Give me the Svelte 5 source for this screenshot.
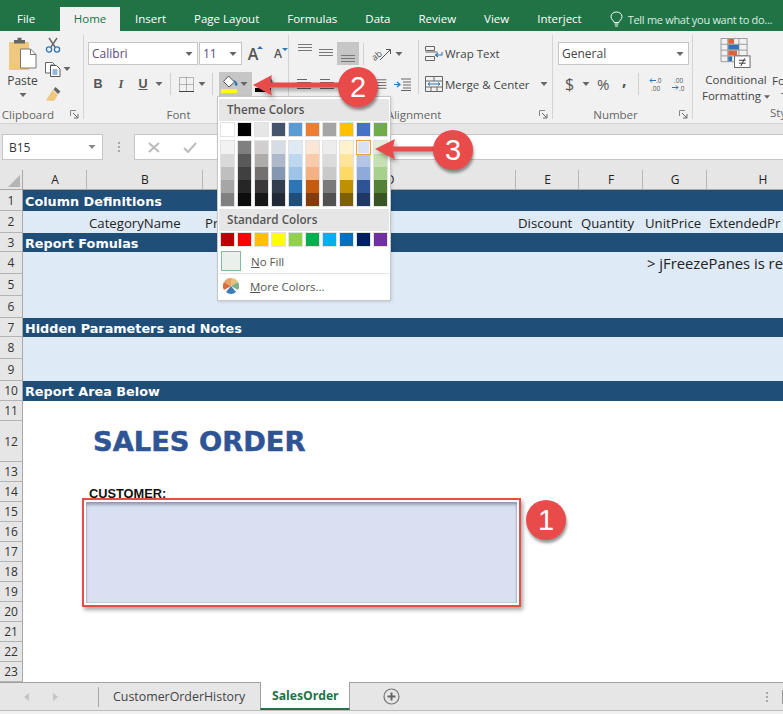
<script>
  const tabs = ['Insert', 'Page Layout', 'Formulas', 'Data', 'Review', 'View', 'Interject'];

  const columns = ['A', 'B', 'C', 'D', 'E', 'F', 'G', 'H'];

  // row heights as in the sheet, kind says how the band is painted
  const rows = [
    { n: 1, h: 21, kind: 'head', title: 'Column Definitions' },
    { n: 2, h: 22, kind: 'band', cells: [
      { col: 2, text: 'CategoryName' },
      { col: 3, text: 'Pr' },
      { col: 5, text: 'Discount' },
      { col: 6, text: 'Quantity' },
      { col: 7, text: 'UnitPrice' },
      { col: 8, text: 'ExtendedPr' }
    ] },
    { n: 3, h: 19, kind: 'head', title: 'Report Fomulas' },
    { n: 4, h: 22, kind: 'band', cells: [{ col: 7, text: '> jFreezePanes is re', note: true }] },
    { n: 5, h: 22, kind: 'band' },
    { n: 6, h: 22, kind: 'band' },
    { n: 7, h: 19, kind: 'head', title: 'Hidden Parameters and Notes' },
    { n: 8, h: 22, kind: 'band' },
    { n: 9, h: 22, kind: 'band' },
    { n: 10, h: 20, kind: 'head', title: 'Report Area Below' },
    { n: 11, h: 20 },
    { n: 12, h: 41, kind: 'big', cells: [{ col: 2, text: 'SALES ORDER' }] },
    { n: 13, h: 20 },
    { n: 14, h: 20, kind: 'customer', cells: [{ col: 2, text: 'CUSTOMER:' }] },
    { n: 15, h: 20 }, { n: 16, h: 20 }, { n: 17, h: 20 }, { n: 18, h: 20 },
    { n: 19, h: 20 }, { n: 20, h: 20 }, { n: 21, h: 20 }, { n: 22, h: 20 }, { n: 23, h: 20 }
  ];

  const rowTemplate = '20px ' + rows.map((r) => r.h + 'px').join(' ');

  const themeTop = ['#ffffff', '#000000', '#e7e6e6', '#44546a', '#5b9bd5', '#ed7d31', '#a5a5a5', '#ffc000', '#4472c4', '#70ad47'];
  const themeShades = [
    ['#f2f2f2', '#d9d9d9', '#bfbfbf', '#a6a6a6', '#808080'],
    ['#7f7f7f', '#595959', '#404040', '#262626', '#0d0d0d'],
    ['#d0cece', '#aeabab', '#757070', '#3a3838', '#171717'],
    ['#d6dce4', '#adb9ca', '#8497b0', '#333f4f', '#222b35'],
    ['#deeaf6', '#bdd7ee', '#9dc3e6', '#2e75b5', '#1e4e79'],
    ['#fbe5d5', '#f7cbac', '#f4b183', '#c55a11', '#833c0b'],
    ['#ededed', '#dbdbdb', '#c9c9c9', '#7b7b7b', '#525252'],
    ['#fff2cc', '#fee599', '#ffd966', '#bf9000', '#7f6000'],
    ['#d9e2f3', '#b4c6e7', '#8eaadb', '#2f5496', '#1f3864'],
    ['#e2efd9', '#c5e0b3', '#a8d08d', '#538135', '#375623']
  ];
  const standard = ['#c00000', '#ff0000', '#ffc000', '#ffff00', '#92d050', '#00b050', '#00b0f0', '#0070c0', '#002060', '#7030a0'];
</script>

{#snippet caret(w = 8)}
  <svg class="caret" width={w} height="4" viewBox="0 0 7 4"><path d="M0 0h7L3.500 4z" fill="#666" /></svg>
{/snippet}

{#snippet launcher()}
  <svg class="launch" width="9" height="9" viewBox="0 0 9 9">
    <path d="M.5 6V.5H6" fill="none" stroke="#888" />
    <path d="M3 3l4.500 4.500M8 4v4H4" fill="none" stroke="#666" />
  </svg>
{/snippet}

{#snippet lines(widths, x = 0)}
  <svg width="17" height="13" viewBox="0 0 17 13">
    {#each widths as w, i}
      <rect x={x} y={i * 3 + 1} width={w} height="1" fill="#666" />
    {/each}
  </svg>
{/snippet}

{#snippet valign(y)}
  <svg width="14" height="23" viewBox="0 0 14 23">
    {#each [0, 3, 6] as d}
      <rect x="0" y={y + d} width="14" height="1" fill="#777" />
    {/each}
  </svg>
{/snippet}

<div class="page">
  <header class="titlebar">
    <span class="file">File</span>
    <span class="tab active">Home</span>
    {#each tabs as t}
      <span class="tab">{t}</span>
    {/each}
    <span class="tellme">
      <svg width="13" height="16" viewBox="0 0 13 16">
        <path d="M4.200 11.500C3.800 9.600 1 8.500 1 5.600 1 3 3.400 1 6.500 1S12 3 12 5.600c0 2.900-2.800 4-3.200 5.900z" fill="none" stroke="#fff" />
        <path d="M4.500 13h4M5 15h3" stroke="#fff" />
      </svg>
      Tell me what you want to do...
    </span>
  </header>

  <section class="ribbon">
    <div class="group clipboard">
      <div class="body">
        <div class="paste">
          <svg width="29" height="35" viewBox="0 0 29 35">
            <path d="M1 5h20v28H1z" fill="#f0c77e" />
            <path d="M6 5V3h3.500V.8h4V3H17v3.500H6z" fill="#666" />
            <path d="M12.500 12h10l5.500 5.500V31h-15.500z" fill="#fff" stroke="#777" />
            <path d="M22.500 12v5.500H28" fill="none" stroke="#777" />
          </svg>
          <span class="paste-label">Paste</span>
          {@render caret()}
        </div>
        <div class="clip-tools">
          <div class="clip-tool">
            <svg width="16" height="16" viewBox="0 0 16 16">
              <path d="M4 1l6 9M12 1l-6 9" stroke="#666" stroke-width="1.400" fill="none" />
              <circle cx="4" cy="12.500" r="2.600" fill="none" stroke="#2e75b5" stroke-width="1.300" />
              <circle cx="12" cy="12.500" r="2.600" fill="none" stroke="#2e75b5" stroke-width="1.300" />
            </svg>
          </div>
          <div class="clip-tool">
            <svg width="16" height="15" viewBox="0 0 16 15">
              <path d="M.5.500h7l2 2V3H5.500v8H.5z" fill="#fff" stroke="#666" />
              <path d="M5.500 3.500h6l3.500 3.500v7.500H5.500z" fill="#fff" stroke="#555" />
              <path d="M7.500 8h5M7.500 10h5M7.500 12h5" stroke="#2e75b5" />
            </svg>
            {@render caret()}
          </div>
          <div class="clip-tool">
            <svg width="17" height="15" viewBox="0 0 17 15">
              <path d="M10.500 1l5 4.500-2.500 2.500-4.500-4.500z" fill="#666" />
              <path d="M7.500 4L13 9l-4 6-8-.5z" fill="#f0c77e" />
            </svg>
          </div>
        </div>
      </div>
      <div class="label"><span></span><span class="name">Clipboard</span>{@render launcher()}</div>
    </div>

    <div class="group font">
      <div class="body stack">
        <div class="row">
          <div class="box fontname"><span class="purple">Calibri</span>{@render caret()}</div>
          <div class="box fontsize"><span class="purple">11</span>{@render caret()}</div>
          <span class="growa big">A<i class="tick up"></i></span>
          <span class="growa small">A<i class="tick down"></i></span>
        </div>
        <div class="row second">
          <span class="tool b" style="width:20px">B</span>
          <span class="tool i" style="width:26px">I</span>
          <span class="tool u" style="width:18px">U</span>
          <span class="tool" style="width:14px">{@render caret()}</span>
          <span class="tool" style="width:8px"><i class="vsep"></i></span>
          <span class="tool" style="width:24px">
            <svg width="15" height="15" viewBox="0 0 15 15">
              <path d="M.5.500h14v14H.5zM7.500.5v14M.5 7.500h14" fill="none" stroke="#777" stroke-dasharray="1 1" />
              <path d="M0 14.500h15" stroke="#444" />
            </svg>
          </span>
          <span class="tool" style="width:8px">{@render caret()}</span>
          <span class="tool" style="width:13px"><i class="vsep"></i></span>
          <span class="tool fill" style="width:33px">
            <svg width="18" height="19" viewBox="0 0 18 19">
              <path d="M7.500 1l6 6-5.500 5-5.500-5.500z" fill="#fff" stroke="#555" />
              <path d="M13 5c2 1 3.500 2.500 3.500 4.500a1.300 1.300 0 0 1-2.600 0z" fill="#2e75b5" />
              <rect x="0" y="14" width="16" height="4" fill="#ffff00" />
            </svg>
            {@render caret()}
          </span>
          <span class="tool color" style="width:33px">
            <span class="color-a">A</span>
            <i class="color-bar"></i>
          </span>
        </div>
      </div>
      <div class="label"><span></span><span class="name">Font</span><span></span></div>
    </div>

    <div class="group alignment">
      <div class="body split">
        <div class="stack">
          <div class="row">
            <span class="tool" style="width:20px">{@render valign(2)}</span>
            <span class="tool" style="width:22px">{@render valign(7)}</span>
            <span class="tool active" style="width:22px;height:23px">{@render valign(13)}</span>
            <span class="tool" style="width:8px"><i class="vsep"></i></span>
            <span class="tool" style="width:28px">
              <svg class="orient-icon" width="22" height="18" viewBox="0 0 22 18">
                <text x="1" y="14" transform="rotate(-38 6 10)" class="orient">ab</text>
                <path d="M10 15L20 5M16 4.500h4.500V9" fill="none" stroke="#555" />
              </svg>
            </span>
            {@render caret()}
          </div>
          <div class="row second">
            <span class="tool" style="width:20px">{@render lines([10, 14, 10, 14])}</span>
            <span class="tool" style="width:22px">{@render lines([10, 14, 10, 14], 2)}</span>
            <span class="tool" style="width:40px">{@render lines([10, 14, 10, 14], 4)}</span>
            <span class="tool" style="width:16px">{@render lines([10, 10, 10, 10], 0)}</span>
            <span class="tool" style="width:18px">
              <svg width="17" height="13" viewBox="0 0 17 13">
                <path d="M0 6.500h5M3 4l3 2.500L3 9" fill="none" stroke="#2e75b5" stroke-width="1.200" />
                <path d="M7 1h10M9 4h8M9 7h8M9 10h8M7 12.500h10" stroke="#666" />
              </svg>
            </span>
          </div>
        </div>
        <i class="vsep tall"></i>
        <div class="stack wrapcol">
          <div class="row textrow">
            <svg width="18" height="16" viewBox="0 0 18 16">
              <path d="M.5.500h9v4h-9zM.5 6h12M.5 10.500h9v4h-9z" fill="none" stroke="#666" />
              <path d="M17 6v3h-6M13 7l-2.500 2 2.500 2" fill="none" stroke="#2e75b5" stroke-width="1.100" />
            </svg>
            <span>Wrap Text</span>
          </div>
          <div class="row textrow">
            <svg width="18" height="16" viewBox="0 0 18 16">
              <path d="M.5.500h17v15H.5zM.5 5h17M.5 11h17M9 .5V5M6 11v4.500M12 11v4.500" fill="none" stroke="#666" />
              <path d="M3 8h12M5 6.500L3 8l2 1.500M13 6.500L15 8l-2 1.500" fill="none" stroke="#2e75b5" />
            </svg>
            <span>Merge &amp; Center</span>
            <span class="gapcaret">{@render caret()}</span>
          </div>
        </div>
      </div>
      <div class="label"><span></span><span class="name">Alignment</span>{@render launcher()}</div>
    </div>

    <div class="group number">
      <div class="body stack">
        <div class="row">
          <div class="box general"><span>General</span>{@render caret()}</div>
        </div>
        <div class="row second numtools">
          <span class="sym dollar">$</span>
          <span class="tool" style="width:14px">{@render caret()}</span>
          <span class="sym pct">%</span>
          <span class="sym comma">,</span>
          <span class="tool" style="width:10px"><i class="vsep"></i></span>
          <svg class="decimals" width="16" height="14" viewBox="0 0 16 14">
            <text x="7" y="6" class="dec">.0</text>
            <text x="2" y="13.500" class="dec">.00</text>
            <path d="M7 3.500H1M3 1.500L1 3.500l2 2" fill="none" stroke="#2e75b5" />
          </svg>
          <svg class="decimals" width="16" height="14" viewBox="0 0 16 14">
            <text x="3" y="6" class="dec">.00</text>
            <text x="8" y="13.500" class="dec">.0</text>
            <path d="M1 10.500h6M5 8.500l2 2-2 2" fill="none" stroke="#2e75b5" />
          </svg>
        </div>
      </div>
      <div class="label"><span></span><span class="name">Number</span>{@render launcher()}</div>
    </div>

    <div class="group styles">
      <div class="body styles-body">
        <div class="cond">
          <svg width="32" height="31" viewBox="0 0 32 31">
            <path d="M.5.500h27v24H.5zM.5 6.500h27M.5 12.500h27M.5 18.500h27M7.500.5v24M19 .5v24" fill="none" stroke="#999" />
            <rect x="8" y="1" width="6" height="5" fill="#e0603c" />
            <rect x="8" y="7" width="11" height="5" fill="#2e75b5" />
            <rect x="8" y="13" width="9" height="5" fill="#e0603c" />
            <rect x="8" y="19" width="4" height="5" fill="#2e75b5" />
            <rect x="14.500" y="18.500" width="16" height="12" fill="#fff" stroke="#666" />
            <path d="M19 23h7M19 26h7M25 21l-4 8" stroke="#333" fill="none" />
          </svg>
          <span class="cond-text">Conditional<br />Formatting <span class="inline-caret">{@render caret(6)}</span></span>
        </div>
        <span class="cond-text next">Fo<br /><span class="t">T</span></span>
      </div>
      <div class="label sty">Sty</div>
    </div>
  </section>

  <section class="formulabar">
    <div class="namebox"><span>B15</span>{@render caret(10)}</div>
    <span class="grip"><i></i><i></i><i></i></span>
    <div class="formula">
      <svg width="12" height="11" viewBox="0 0 12 11"><path d="M1 1l10 9M11 1L1 10" stroke="#bbb" stroke-width="2" /></svg>
      <svg width="14" height="11" viewBox="0 0 14 11"><path d="M1 6l4 4 8-9" stroke="#bbb" stroke-width="2" fill="none" /></svg>
    </div>
  </section>

  <section class="sheet" style="grid-template-rows:{rowTemplate}">
    <div class="corner"><svg width="12" height="12" viewBox="0 0 12 12"><path d="M12 0v12H0z" fill="#b5b5b5" /></svg></div>
    {#each columns as c}
      <div class="colhead">{c}</div>
    {/each}
    {#each rows as r}
      <div class="rowhead">{r.n}</div>
      {#if r.kind === 'head'}
        <div class="head-row">{r.title}</div>
      {:else}
        <div class="cells {r.kind ?? ''}">
          {#each r.cells ?? [] as cell}
            <span class="cell" class:note={cell.note} style="grid-column:{cell.col}">{cell.text}</span>
          {/each}
        </div>
      {/if}
    {/each}
  </section>

  <footer class="tabsbar">
    <svg class="nav first" width="5" height="8" viewBox="0 0 5 8"><path d="M5 0v8L0 4z" fill="#c4c4c4" /></svg>
    <svg class="nav" width="5" height="8" viewBox="0 0 5 8"><path d="M0 0v8l5-4z" fill="#c4c4c4" /></svg>
    <i class="tabsep"></i>
    <span class="sheettab">CustomerOrderHistory</span>
    <span class="sheettab current">SalesOrder</span>
    <svg class="plus" width="17" height="17" viewBox="0 0 17 17">
      <circle cx="8.500" cy="8.500" r="7.500" fill="none" stroke="#777" stroke-width="1.200" />
      <path d="M8.500 4.500v8M4.500 8.500h8" stroke="#666" stroke-width="2" />
    </svg>
    <span class="tabgrip"><i></i><i></i><i></i></span>
    <i class="splitter"></i>
  </footer>
  <div class="statusbar"></div>

  <!-- overlays: open fill colour menu and the screenshot annotations -->
  <div class="menu">
    <div class="menu-title">Theme Colors</div>
    <div class="swatches top">
      {#each themeTop as c}
        <i class="swatch" style="background:{c}"></i>
      {/each}
    </div>
    <div class="shades">
      {#each themeShades as col, x}
        <div class="shade-col">
          {#each col as c, y}
            <i class="shade" class:picked={x === 8 && y === 0} style="background:{c}"></i>
          {/each}
        </div>
      {/each}
    </div>
    <div class="menu-title second">Standard Colors</div>
    <div class="swatches top">
      {#each standard as c}
        <i class="swatch" style="background:{c}"></i>
      {/each}
    </div>
    <div class="menu-item nofill">
      <i class="nofill-box"></i>
      <span><u>N</u>o Fill</span>
    </div>
    <div class="menu-item more">
      <svg width="16" height="16" viewBox="0 0 16 16">
        <path d="M8 8L8 0A8 8 0 0 1 15 4z" fill="#e8c27c" />
        <path d="M8 8L15 4A8 8 0 0 1 15 12z" fill="#7fb08e" />
        <path d="M8 8L13 14A8 8 0 0 1 3 14z" fill="#3e7ab8" />
        <path d="M8 8L1 12A8 8 0 0 1 1 4z" fill="#dc6b3a" />
        <path d="M8 8L1 4A8 8 0 0 1 8 0z" fill="#e5a26b" />
      </svg>
      <span class="more-label"><u>M</u>ore Colors...</span>
    </div>
  </div>

  <div class="callout"><div class="callout-fill"></div></div>

  <svg class="arrows" width="783" height="714" viewBox="0 0 783 714">
    <path d="M253 85l19-10-2 7.500h70v5h-70l2 8z" fill="#e94b4b" />
    <path d="M375 149l20-10-2 7.500h50v5h-50l2 8z" fill="#e94b4b" />
  </svg>
  <div class="badge b1">1</div>
  <div class="badge b2">2</div>
  <div class="badge b3">3</div>
</div>

<style>
  :global(body) {
    margin: 0;
    background: #fff;
  }

  .page {
    position: relative;
    width: 783px;
    height: 714px;
    overflow: hidden;
    display: flex;
    flex-direction: column;
    font-family: 'Open Sans', 'Noto Sans', sans-serif;
    font-size: 11.5px;
    color: #444;
  }

  i {
    display: block;
  }

  /* title bar */
  .titlebar {
    flex: none;
    height: 31px;
    background: #217346;
    display: flex;
    align-items: flex-end;
    color: #fff;
    white-space: nowrap;
  }

  .file {
    flex: none;
    width: 43px;
    padding-left: 17px;
    height: 24px;
    line-height: 23px;
  }

  .tab {
    flex: none;
    padding: 0 14px;
    height: 24px;
    line-height: 23px;
  }

  .tab.active {
    background: #f1f1f1;
    color: #217346;
    padding: 0 13.500px;
    width: 33px;
    text-align: center;
  }

  .tab.active + .tab {
    padding-left: 15px;
  }

  .tellme {
    flex: none;
    display: flex;
    align-items: center;
    gap: 5px;
    height: 24px;
    margin-left: 14px;
    color: #d9eee1;
    font-size: 11px;
    letter-spacing: -0.3px;
  }

  /* ribbon */
  .ribbon {
    flex: none;
    height: 92px;
    background: #f1f1f1;
    border-bottom: 1px solid #d2d2d2;
    display: flex;
  }

  .group {
    position: relative;
    flex: none;
    display: flex;
    flex-direction: column;
    box-sizing: border-box;
    padding-top: 11px;
  }

  .group::after {
    content: '';
    position: absolute;
    right: 0;
    top: 4px;
    bottom: 4px;
    width: 1px;
    background: #d4d4d4;
  }

  .body {
    flex: 1;
    min-height: 0;
  }

  .label {
    height: 19px;
    padding-top: 1px;
    box-sizing: border-box;
    display: grid;
    grid-template-columns: 1fr auto 1fr;
    align-items: center;
    color: #666;
    text-align: center;
  }

  .label .name {
    margin-right: 20px;
  }

  .clipboard .label .name {
    margin-right: 16px;
  }

  .launch {
    justify-self: end;
    margin-right: 5px;
  }

  .clipboard {
    width: 84px;
    padding-top: 6px;
  }

  .clipboard .body {
    display: flex;
    padding-left: 8px;
  }

  .paste {
    width: 29px;
    display: flex;
    flex-direction: column;
    align-items: center;
  }

  .paste-label {
    margin-top: 1px;
    line-height: 16px;
    font-size: 12px;
    color: #444;
  }

  .paste .caret {
    margin-top: 4px;
  }

  .clip-tools {
    margin-left: 8px;
    display: flex;
    flex-direction: column;
    gap: 8px;
  }

  .clip-tool {
    height: 16px;
    display: flex;
    align-items: center;
    gap: 2px;
  }

  .font {
    width: 205px;
    padding-left: 4px;
  }

  .stack {
    display: flex;
    flex-direction: column;
  }

  .row {
    display: flex;
    align-items: center;
    height: 23px;
  }

  .row.second {
    margin-top: 7px;
    height: 24px;
  }

  .box {
    box-sizing: border-box;
    height: 23px;
    background: #fff;
    border: 1px solid #c6c6c6;
    display: flex;
    align-items: center;
    justify-content: space-between;
    padding: 0 4px 0 3px;
    font-size: 12px;
    color: #444;
  }

  .purple {
    color: #5a4a78;
  }

  .fontname {
    width: 110px;
    margin-right: 1px;
  }

  .fontsize {
    width: 43px;
  }

  .growa {
    position: relative;
    color: #555;
    font-weight: 600;
    width: 14px;
    text-align: center;
  }

  .growa.big {
    margin-left: 4px;
    font-size: 16px;
  }

  .growa.small {
    margin-left: 11px;
    font-size: 12px;
  }

  .tick {
    position: absolute;
    right: -3px;
    top: 3px;
    width: 0;
    height: 0;
    border-left: 3px solid transparent;
    border-right: 3px solid transparent;
  }

  .tick.up {
    border-bottom: 3px solid #2e75b5;
  }

  .tick.down {
    border-top: 3px solid #2e75b5;
  }

  .tool {
    flex: none;
    display: flex;
    align-items: center;
    justify-content: center;
    height: 24px;
    color: #555;
    font-size: 12.500px;
  }

  .tool.b {
    font-weight: 700;
    font-family: 'Liberation Sans', sans-serif;
  }

  .tool.i {
    font-style: italic;
    font-weight: 700;
    font-family: 'Liberation Serif', serif;
  }

  .tool.u {
    font-weight: 700;
    text-decoration: underline;
    font-family: 'Liberation Sans', sans-serif;
  }

  .tool.fill {
    background: #c6c6c6;
    gap: 1px;
    justify-content: flex-start;
    padding-left: 2px;
    box-sizing: border-box;
  }

  .tool.color {
    position: relative;
    margin-left: 1px;
  }

  .color-a {
    font-weight: 700;
    font-size: 13px;
    margin-top: -6px;
  }

  .color-bar {
    position: absolute;
    left: 2px;
    top: 16px;
    width: 16px;
    height: 4px;
    background: #000;
  }

  .tool.active {
    background: #c6c6c6;
  }

  .vsep {
    width: 1px;
    height: 22px;
    background: #d0d0d0;
  }

  .alignment {
    width: 264px;
    padding-left: 6px;
  }

  .split {
    display: flex;
  }

  .split > .stack {
    width: 123px;
  }

  .vsep.tall {
    height: 54px;
    margin-top: -2px;
  }

  .stack.wrapcol {
    margin-left: 6px;
    width: 128px;
  }

  .textrow {
    gap: 2px;
    font-size: 11.500px;
    color: #444;
    white-space: nowrap;
  }

  .wrapcol .textrow + .textrow {
    margin-top: 7px;
    height: 24px;
  }

  .gapcaret {
    margin-left: 8px;
    display: flex;
  }

  .orient-icon {
    overflow: visible;
  }

  .orient {
    font-size: 9px;
    fill: #555;
    font-family: 'Open Sans', sans-serif;
  }

  .number {
    width: 140px;
    padding-left: 5px;
  }

  .general {
    width: 131px;
  }

  .numtools {
    padding-left: 7px;
  }

  .sym {
    color: #555;
    font-size: 16px;
    flex: none;
  }

  .dollar {
    width: 14px;
  }

  .pct {
    margin-left: 4px;
    width: 20px;
    font-size: 15px;
  }

  .comma {
    margin-left: 5px;
    width: 11px;
    font-weight: 700;
    margin-top: -8px;
  }

  .decimals {
    flex: none;
    margin-left: 6px;
  }

  .dec {
    font-size: 6.500px;
    fill: #555;
    font-family: 'Open Sans', sans-serif;
  }

  .styles {
    width: 90px;
    padding-top: 7px;
  }

  .styles::after {
    display: none;
  }

  .styles-body {
    display: flex;
    padding-left: 7px;
  }

  .cond {
    width: 72px;
    flex: none;
    display: flex;
    flex-direction: column;
    align-items: center;
  }

  .cond-text {
    display: block;
    margin-top: 4px;
    font-size: 11.500px;
    line-height: 16px;
    white-space: nowrap;
    text-align: center;
    color: #444;
  }

  .cond-text.next {
    margin-top: 35px;
    text-align: left;
  }

  .t {
    margin-left: 9px;
  }

  .inline-caret {
    display: inline-flex;
    vertical-align: middle;
  }

  .label.sty {
    display: block;
    text-align: left;
    padding-left: 77px;
  }

  /* formula bar */
  .formulabar {
    flex: none;
    height: 46px;
    background: #e6e6e6;
    box-sizing: border-box;
    padding-top: 10px;
    display: flex;
    align-items: flex-start;
  }

  .namebox {
    box-sizing: border-box;
    margin-left: 2px;
    width: 101px;
    height: 26px;
    background: #fff;
    border: 1px solid #c6c6c6;
    display: flex;
    align-items: center;
    justify-content: space-between;
    padding: 0 5px 0 6px;
    font-size: 12px;
    color: #333;
  }

  .namebox :global(path) {
    fill: #888;
  }

  .grip {
    width: 31px;
    height: 26px;
    display: flex;
    flex-direction: column;
    align-items: center;
    justify-content: center;
    gap: 2px;
  }

  .grip i,
  .tabgrip i {
    width: 2px;
    height: 2px;
    background: #a8a8a8;
  }

  .formula {
    flex: 1;
    box-sizing: border-box;
    height: 26px;
    background: #fff;
    border: 1px solid #c6c6c6;
    border-right: 0;
    display: flex;
    align-items: center;
    gap: 23px;
    padding-left: 13px;
  }

  /* sheet */
  .sheet {
    flex: none;
    height: 512px;
    display: grid;
    grid-template-columns: 23px 64px 116px 61px 252px 63px 64px 64px 112px;
    font-size: 13.200px;
    color: #222;
    background: #fff;
  }

  .corner {
    background: #e6e6e6;
    border-right: 1px solid #a8a8a8;
    border-bottom: 1px solid #a8a8a8;
    box-sizing: border-box;
    display: flex;
    align-items: flex-end;
    justify-content: flex-end;
    padding: 0 2px 2px 0;
  }

  .colhead {
    background: #e6e6e6;
    border-bottom: 1px solid #a8a8a8;
    box-sizing: border-box;
    text-align: center;
    line-height: 19px;
    position: relative;
    font-size: 12px;
  }

  .colhead::after {
    content: '';
    position: absolute;
    right: 0;
    top: 0;
    bottom: 0;
    width: 1px;
    background: #b8b8b8;
  }

  .rowhead {
    background: #e6e6e6;
    border-right: 1px solid #a8a8a8;
    border-bottom: 1px solid #b4b4b4;
    box-sizing: border-box;
    display: flex;
    align-items: center;
    justify-content: center;
    font-size: 12px;
    color: #333;
  }

  .head-row {
    grid-column: 2 / -1;
    background: #1f4e79;
    color: #fff;
    font-family: 'DejaVu Sans', sans-serif;
    font-weight: 700;
    font-size: 12.800px;
    padding: 1px 0 0 2px;
    box-sizing: border-box;
    display: flex;
    align-items: center;
    white-space: nowrap;
  }

  .cells {
    grid-column: 2 / -1;
    display: grid;
    grid-template-columns: subgrid;
    align-items: end;
    white-space: nowrap;
    min-width: 0;
  }

  .cells.band {
    background: #deeaf6;
  }

  .cell {
    grid-row: 1;
    padding: 0 0 2px 2px;
    line-height: 17px;
  }

  .band .cell {
    align-self: center;
    padding: 3px 0 0 2px;
  }

  .band .cell.note {
    font-size: 14.800px;
    padding: 1px 0 0 4px;
  }

  .big .cell {
    font-family: 'DejaVu Sans', sans-serif;
    font-weight: 700;
    font-size: 27.300px;
    -webkit-text-stroke: 0.5px #2f5496;
    line-height: 36px;
    color: #2f5496;
    padding-left: 6px;
  }

  .customer .cell {
    font-family: 'Liberation Sans', sans-serif;
    font-weight: 700;
    font-size: 12.800px;
    color: #111;
    padding-bottom: 0;
  }

  /* sheet tabs */
  .tabsbar {
    flex: none;
    box-sizing: border-box;
    height: 29px;
    background: #e6e6e6;
    border-top: 1px solid #a0a0a0;
    border-bottom: 1px solid #bdbdbd;
    display: flex;
    align-items: center;
  }

  .nav.first {
    margin-left: 24px;
    margin-right: 24px;
  }

  .tabsep {
    margin-left: 40px;
    width: 1px;
    height: 20px;
    background: #a8a8a8;
  }

  .sheettab {
    font-size: 12.400px;
    color: #444;
    margin-left: 14px;
    white-space: nowrap;
  }

  .sheettab.current {
    box-sizing: border-box;
    font-size: 12.200px;
    margin-left: 15px;
    width: 90px;
    height: 28px;
    margin-top: -1px;
    background: #fff;
    border: 1px solid #a0a0a0;
    border-top: 0;
    border-bottom: 2px solid #217346;
    color: #217346;
    font-weight: 700;
    text-align: center;
    line-height: 27px;
  }

  .plus {
    margin-left: 33px;
  }

  .tabgrip {
    margin-left: auto;
    margin-right: 14px;
    display: flex;
    flex-direction: column;
    gap: 2px;
  }

  .splitter {
    width: 1px;
    height: 14px;
    background: #999;
  }

  .statusbar {
    flex: 1;
    background: #f1f1f1;
  }

  /* fill colour menu */
  .menu {
    position: absolute;
    left: 217px;
    top: 96px;
    box-sizing: border-box;
    width: 174px;
    height: 205px;
    background: #fff;
    border: 1px solid #c6c6c6;
    padding: 2px 1px 0;
    box-shadow: 1px 1px 3px rgba(0, 0, 0, 0.12);
  }

  .menu-title {
    height: 22px;
    line-height: 21px;
    background: #e6e6e6;
    padding-left: 8px;
    font-weight: 600;
    font-size: 11.700px;
    color: #555;
  }

  .menu-title.second {
    margin-top: 3px;
  }

  .swatches {
    display: flex;
    gap: 4px;
    padding: 2px 0 0 2px;
  }

  .swatch,
  .shade {
    box-sizing: border-box;
    width: 13px;
    height: 13px;
  }

  .swatch {
    box-shadow: 0 0 0 1px #e2e2e2;
  }

  .shades {
    display: flex;
    gap: 4px;
    padding: 5px 0 0 2px;
  }

  .shade-col {
    position: relative;
    box-shadow: 0 0 0 1px #e2e2e2;
  }

  .shade.picked {
    position: relative;
    outline: 1px solid #f0a040;
    box-shadow: inset 0 0 0 1px #fff4e0;
  }

  .menu-item {
    display: flex;
    align-items: center;
    font-size: 11.500px;
    color: #555;
  }

  .nofill {
    margin-top: 4px;
    height: 22px;
    padding-left: 2px;
    gap: 10px;
    border-bottom: 1px solid #e2e2e2;
    padding-bottom: 1px;
  }

  .nofill-box {
    box-sizing: border-box;
    width: 20px;
    height: 20px;
    background: #e9f1ec;
    border: 1px solid #7fbf9a;
  }

  .more {
    height: 24px;
    padding-left: 4px;
    gap: 11px;
  }

  .more-label {
    white-space: nowrap;
  }

  /* annotations */
  .callout {
    position: absolute;
    left: 82px;
    top: 498px;
    box-sizing: border-box;
    width: 439px;
    height: 109px;
    border: 2px solid #e94b4b;
    padding: 2px;
    background: #fff;
    box-shadow: 2px 3px 4px rgba(0, 0, 0, 0.35);
  }

  .callout-fill {
    height: 100%;
    background: #d9e0f1;
    box-shadow: inset 0 3px 3px rgba(90, 100, 130, 0.5), inset 0 0 0 1px #c8ccd6;
  }

  .arrows {
    position: absolute;
    left: 0;
    top: 0;
    pointer-events: none;
    filter: drop-shadow(2px 3px 2px rgba(0, 0, 0, 0.35));
  }

  .badge {
    position: absolute;
    width: 40px;
    height: 40px;
    margin: -20px 0 0 -20px;
    border-radius: 50%;
    background: #e94b4b;
    color: #fff;
    font-family: 'Liberation Sans', sans-serif;
    font-size: 29px;
    line-height: 40px;
    text-align: center;
    box-shadow: 1px 3px 3px rgba(0, 0, 0, 0.4);
  }

  .b1 {
    left: 546px;
    top: 520px;
  }

  .b2 {
    left: 358px;
    top: 87px;
  }

  .b3 {
    left: 453px;
    top: 150px;
  }
</style>
